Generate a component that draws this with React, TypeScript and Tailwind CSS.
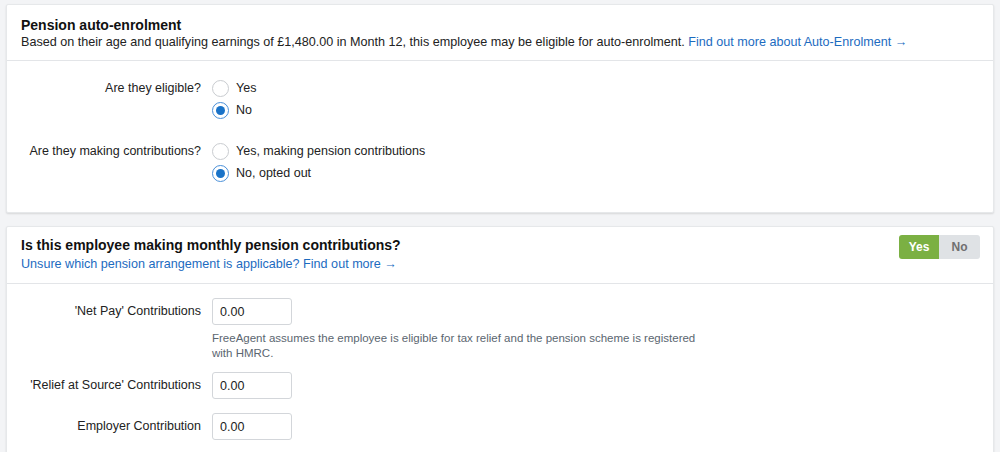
import { useState } from 'react'

function Radio({ checked, label, onClick }: { checked: boolean; label: string; onClick: () => void }) {
  return (
    <label className="flex items-center gap-[7px] h-[22px] cursor-pointer" onClick={onClick}>
      <span
        className={`w-[17px] h-[17px] rounded-full border flex items-center justify-center bg-white ${
          checked ? 'border-[#4a90d9]' : 'border-[#c9ccd0]'
        }`}
      >
        {checked && <span className="w-[9px] h-[9px] rounded-full bg-[#1a73c8]" />}
      </span>
      <span className="text-[12.5px] text-[#222]">{label}</span>
    </label>
  )
}

function AmountRow({ label, value }: { label: string; value: string }) {
  return (
    <div className="flex items-center">
      <div className="w-[205px] text-right text-[12.5px] text-[#222] pr-[11px]">{label}</div>
      <input
        defaultValue={value}
        className="w-[80px] h-[27px] border border-[#d3d6da] rounded-[3px] px-[7px] text-[12.5px] text-[#222] focus:outline-none"
      />
    </div>
  )
}

export default function App() {
  const [eligible, setEligible] = useState(false)
  const [contrib, setContrib] = useState(false)
  const [monthly, setMonthly] = useState(true)

  return (
    <div className="bg-[#f3f4f6] px-[6px] pt-[4px] font-['Liberation_Sans',Arial,sans-serif] overflow-hidden h-[452px]">
      <div className="bg-white rounded-[2px] border border-[#e6e8ea] shadow-[0_1px_2px_rgba(0,0,0,0.12)] w-[988px]">
        <div className="px-[14px] pt-[12px] pb-[9px] border-b border-[#e3e5e8]">
          <h2 className="text-[14px] font-bold text-[#111] leading-[17px]">Pension auto-enrolment</h2>
          <p className="text-[12.6px] text-[#222] leading-[17px]">
            Based on their age and qualifying earnings of £1,480.00 in Month 12, this employee may be eligible for
            auto-enrolment. <a className="text-[#1c6bbf]">Find out more about Auto-Enrolment →</a>
          </p>
        </div>
        <div className="pt-[16px] pb-[28px]">
          <div className="flex">
            <div className="w-[205px] text-right text-[12.5px] text-[#222] pr-[11px] leading-[22px]">Are they eligible?</div>
            <div className="flex flex-col">
              <Radio checked={eligible} label="Yes" onClick={() => setEligible(true)} />
              <Radio checked={!eligible} label="No" onClick={() => setEligible(false)} />
            </div>
          </div>
          <div className="flex mt-[19px]">
            <div className="w-[205px] text-right text-[12.5px] text-[#222] pr-[11px] leading-[22px]">
              Are they making contributions?
            </div>
            <div className="flex flex-col">
              <Radio checked={contrib} label="Yes, making pension contributions" onClick={() => setContrib(true)} />
              <Radio checked={!contrib} label="No, opted out" onClick={() => setContrib(false)} />
            </div>
          </div>
        </div>
      </div>

      <div className="bg-white rounded-[2px] border border-[#e6e8ea] shadow-[0_1px_2px_rgba(0,0,0,0.12)] w-[988px] mt-[13px]">
        <div className="px-[14px] pt-[9px] pb-[10px] border-b border-[#e3e5e8] flex justify-between items-start">
          <div>
            <h2 className="text-[14px] font-bold text-[#111] leading-[18px]">
              Is this employee making monthly pension contributions?
            </h2>
            <a className="text-[12.6px] text-[#1c6bbf] leading-[17px] block mt-[2px]">
              Unsure which pension arrangement is applicable? Find out more →
            </a>
          </div>
          <div className="flex mt-[-1px] mr-[-1px] rounded-[3px] overflow-hidden">
            <button
              onClick={() => setMonthly(true)}
              className={`w-[40px] h-[24px] text-[12px] font-bold ${
                monthly ? 'bg-[#7bb043] text-white' : 'bg-[#dfe2e5] text-[#707070]'
              }`}
            >
              Yes
            </button>
            <button
              onClick={() => setMonthly(false)}
              className={`w-[41px] h-[24px] text-[12px] font-bold ${
                !monthly ? 'bg-[#7bb043] text-white' : 'bg-[#dfe2e5] text-[#707070]'
              }`}
            >
              No
            </button>
          </div>
        </div>
        <div className="pt-[14px] pb-[20px]">
          <AmountRow label="'Net Pay' Contributions" value="0.00" />
          <p className="ml-[205px] mt-[6px] w-[492px] text-[11.5px] leading-[15px] text-[#5b6670]">
            FreeAgent assumes the employee is eligible for tax relief and the pension scheme is registered with HMRC.
          </p>
          <div className="mt-[11px]">
            <AmountRow label="'Relief at Source' Contributions" value="0.00" />
          </div>
          <div className="mt-[14px]">
            <AmountRow label="Employer Contribution" value="0.00" />
          </div>
        </div>
      </div>
    </div>
  )
}
